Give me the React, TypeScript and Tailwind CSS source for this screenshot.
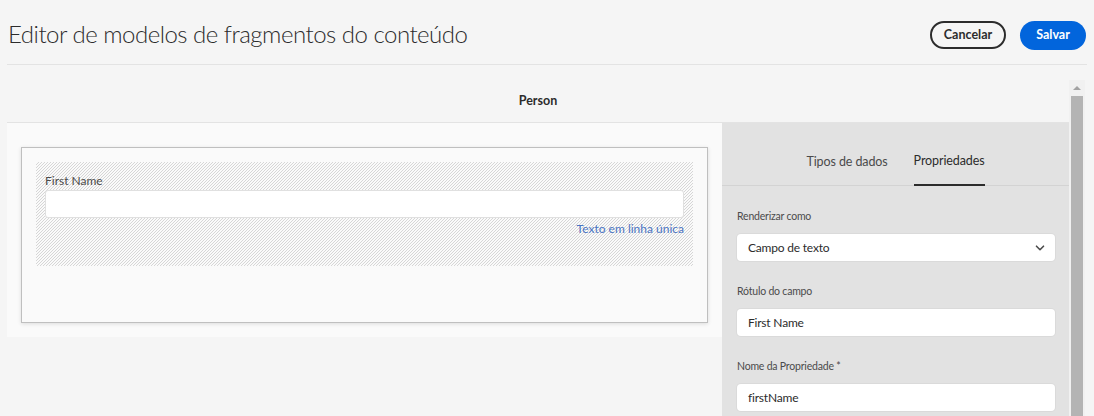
import React from "react";

function Chevron() {
  return (
    <svg width="10" height="10" viewBox="0 0 10 10" className="text-[#4b4b4b]">
      <path d="M1.5 3.2 L5 6.7 L8.5 3.2" fill="none" stroke="currentColor" strokeWidth="1.6" strokeLinecap="round" strokeLinejoin="round" />
    </svg>
  );
}

function Field({ label, value, select }: { label: string; value: string; select?: boolean }) {
  return (
    <div className="flex flex-col">
      <div className="text-[10.5px] leading-[14px] tracking-[-0.2px] text-[#4b4b4b] mb-[11px]">{label}</div>
      <div className="h-[27px] w-[318px] bg-white rounded-[4px] shadow-[0_0_0_1px_#dadada] flex items-center justify-between pl-[11px] pr-[10px]">
        <span className="text-[12px] tracking-[-0.2px] text-[#2c2c2c]">{value}</span>
        {select && <Chevron />}
      </div>
    </div>
  );
}

export default function App() {
  return (
    <div className="w-[1094px] h-[416px] bg-[#f5f5f5] overflow-hidden font-['Lato',sans-serif]">
      <header className="mx-[7px] h-[65px] border-b border-[#e3e3e3] flex items-center justify-between">
        <h1 className="pl-[1px] text-[24px] font-light text-[#2c2c2c] tracking-[-0.5px] mt-[4px]">
          Editor de modelos de fragmentos do conteúdo
        </h1>
        <div className="flex items-center gap-[14px] pr-[1px] mt-[6px]">
          <button className="h-[28px] w-[76px] rounded-full border-2 border-[#2c2c2c] text-[12.5px] font-bold text-[#2c2c2c] flex items-center justify-center">
            Cancelar
          </button>
          <button className="h-[29px] w-[66px] rounded-full bg-[#0265dc] text-[12.5px] font-bold text-white flex items-center justify-center">
            Salvar
          </button>
        </div>
      </header>
      <div className="flex pl-[7px] mt-[15px]">
        <div className="w-[1062px] flex flex-col">
          <div className="h-[43px] border-b border-[#e3e3e3] flex items-center justify-center">
            <span className="text-[12.5px] font-bold text-[#2c2c2c] mt-[1px]">Person</span>
          </div>
          <div className="flex h-[300px]">
            <div className="w-[715px] flex flex-col">
              <div className="bg-[#fafafa] h-[214px] pt-[24px] pl-[14px] pr-[14px]">
                <div className="h-[176px] border border-[#bfbfbf] bg-[#fafafa] shadow-[0_1px_4px_rgba(0,0,0,0.12)] pt-[14px] px-[14px]">
                  <div className="h-[104px] bg-[linear-gradient(to_bottom_right,transparent_calc(50%_-_0.6px),#d6d6d6_50%,transparent_calc(50%_+_0.6px))] bg-[length:3px_3px] px-[9px] pt-[11px]">
                    <div className="text-[12px] leading-[15px] text-[#4b4b4b] mb-[2px]">First Name</div>
                    <div className="h-[28px] bg-white border border-[#e0e0e0] rounded-[3px]" />
                    <div className="text-right text-[12px] leading-[15px] text-[#4b75c4] mt-[3px]">Texto em linha única</div>
                  </div>
                </div>
              </div>
            </div>
            <div className="w-[347px] bg-[#e2e2e2] flex flex-col">
              <div className="h-[63px] border-b border-[#d3d3d3] flex items-end justify-center gap-[26px]">
                <div className="pb-[13px] text-[12.5px] tracking-[-0.1px] text-[#4b4b4b]">Tipos de dados</div>
                <div className="pb-[13px] text-[12.5px] tracking-[-0.1px] text-[#2c2c2c] border-b-2 border-[#2c2c2c] -mb-[1px]">Propriedades</div>
              </div>
              <div className="pl-[15px] pt-[23px] flex flex-col gap-[23px]">
                <Field label="Renderizar como" value="Campo de texto" select />
                <Field label="Rótulo do campo" value="First Name" />
                <Field label="Nome da Propriedade *" value="firstName" />
              </div>
            </div>
          </div>
        </div>
        <div className="w-[16px] bg-[#f1f1f1] flex flex-col items-center h-[340px]">
          <div className="h-[16px] flex items-center justify-center">
            <div className="w-0 h-0 border-l-[4px] border-r-[4px] border-b-[4px] border-l-transparent border-r-transparent border-b-[#a3a3a3]" />
          </div>
          <div className="w-[12px] flex-1 bg-[#b4b4b4]" />
        </div>
      </div>
    </div>
  );
}
